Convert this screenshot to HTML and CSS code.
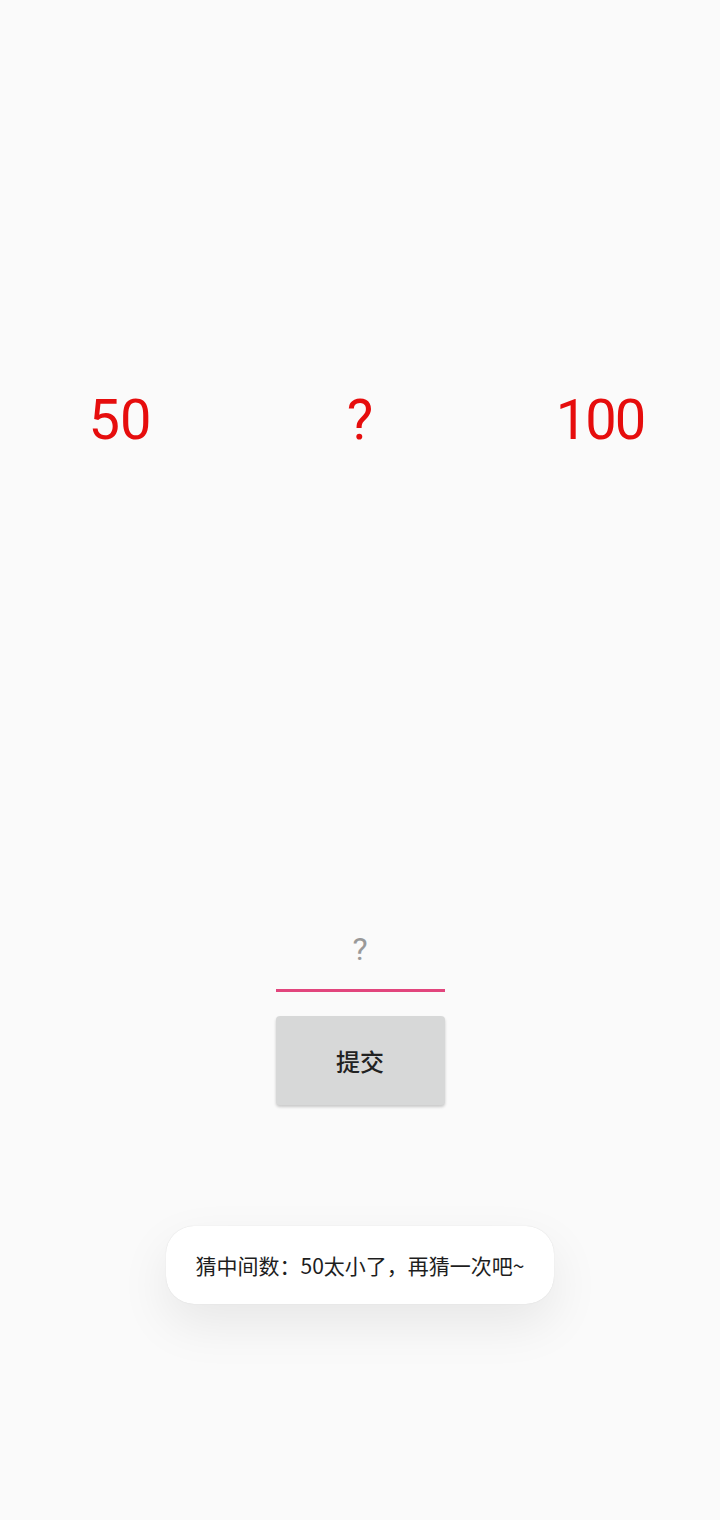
FILE: index.html
```html
<!DOCTYPE html>
<html>
<head>
    <title>猜数字</title>
    <link rel="stylesheet" href="styles.css">
</head>
<body>
    <div class="screen">
        <div class="numbers">
            <span class="num">50</span>
            <span class="num">?</span>
            <span class="num num-wide">100</span>
        </div>

        <div class="form">
            <input type="text" class="guess" placeholder="?">
            <button class="submit">提交</button>
        </div>

        <div class="toast">猜中间数：50太小了，再猜一次吧~</div>
    </div>
</body>
</html>
```

FILE: styles.css
```css
body {
    margin: 0;
    background: #fafafa;
    font-family: Roboto, "Noto Sans CJK SC", sans-serif;
}
.screen {
    position: relative;
    height: 1520px;
}
.numbers {
    display: grid;
    grid-template-columns: 1fr 1fr 1fr;
    padding-top: 385px;
}
.num {
    text-align: center;
    color: #e60d0d;
    font-size: 56px;
    line-height: 70px;
}
.num-wide {
    letter-spacing: -2px;
}
.form {
    display: flex;
    flex-direction: column;
    align-items: center;
    margin-top: 465px;
}
.guess {
    width: 169px;
    height: 72px;
    box-sizing: border-box;
    border: none;
    border-bottom: 3px solid #e2457d;
    background: transparent;
    text-align: center;
    font-family: Roboto, sans-serif;
    font-size: 32px;
    padding: 0 0 12px;
    outline: none;
}
.guess::placeholder {
    color: #999999;
}
.submit {
    margin-top: 24px;
    width: 169px;
    height: 89px;
    border: none;
    border-radius: 4px;
    background: #d7d8d8;
    color: #222;
    font-family: "Noto Sans CJK SC", sans-serif;
    font-size: 24px;
    font-weight: 500;
    box-shadow: 0 2px 3px rgba(0,0,0,0.2);
}
.toast {
    position: absolute;
    left: 166px;
    top: 1226px;
    width: 388px;
    height: 78px;
    box-sizing: border-box;
    background: #fff;
    border-radius: 28px;
    display: flex;
    align-items: center;
    justify-content: center;
    font-family: "Noto Sans CJK SC", sans-serif;
    font-size: 21px;
    color: #1e1e1e;
    box-shadow: 0 20px 50px rgba(0,0,0,0.08), 0 0 1px rgba(0,0,0,0.15);
}
```
